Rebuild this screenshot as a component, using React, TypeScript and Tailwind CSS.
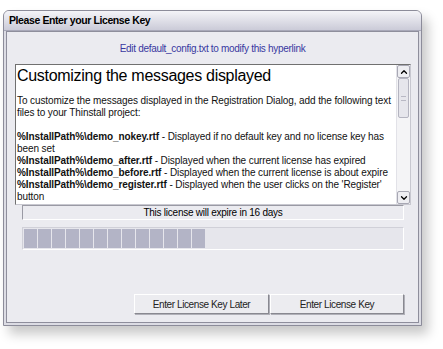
import { ChevronUp, ChevronDown } from 'lucide-react';

const lines: { bold?: string; text: string }[] = [
  { bold: '%InstallPath%\\demo_nokey.rtf', text: ' - Displayed if no default key and no license key has' },
  { text: 'been set' },
  { bold: '%InstallPath%\\demo_after.rtf', text: ' - Displayed when the current license has expired' },
  { bold: '%InstallPath%\\demo_before.rtf', text: ' - Displayed when the current license is about expire' },
  { bold: '%InstallPath%\\demo_register.rtf', text: " - Displayed when the user clicks on the 'Register'" },
  { text: 'button' },
];

export default function App() {
  return (
    <div className="w-[443px] h-[349px] bg-white overflow-hidden pl-[3px] pt-[10px]" style={{ fontFamily: '"Liberation Sans", Arial, sans-serif' }}>
      {/* Dialog window */}
      <div className="w-[419px] h-[316px] flex flex-col rounded-t-[6px] border border-[#8c8c9a] bg-[#dcdce4] shadow-[6px_8px_12px_rgba(0,0,0,0.22)]">
        <div className="h-[20px] shrink-0 flex items-center pl-[5px] rounded-t-[5px] bg-gradient-to-b from-[#f4f4f8] to-[#cbcbd8] border-b border-[#a8a8b8]">
          <span className="text-[10.5px] font-bold text-black leading-none tracking-[-0.4px]">
            Please Enter your License Key
          </span>
        </div>
        <div className="flex-1 mx-[2px] mb-[2px] border border-[#8e8e9c] bg-[#ebebf0] flex flex-col pl-[8px]">
          <div className="h-[32px] flex items-center justify-center text-[10px] tracking-[-0.3px] text-[#3838a0] pr-[8px]">
            Edit default_config.txt to modify this hyperlink
          </div>
          {/* Message box */}
          <div className="w-[396px] h-[141px] flex border border-t-[#707070] border-l-[#707070] border-r-[#c8c8d0] border-b-[#c8c8d0] bg-white">
            <div className="flex-1 pl-[1px] pt-[1px] text-black overflow-hidden">
              <div className="text-[16px] leading-[20px] tracking-[-0.3px]">Customizing the messages displayed</div>
              <div className="text-[10px] leading-[12px] mt-[9px] tracking-[-0.1px] whitespace-nowrap text-[#111]">
                To customize the messages displayed in the Registration Dialog, add the following text
                <br />
                files to your Thinstall project:
              </div>
              <div className="text-[10px] leading-[12px] mt-[12px] tracking-[-0.1px] whitespace-nowrap text-[#111]">
                {lines.map((l, i) => (
                  <div key={i}>
                    {l.bold && <span className="font-bold">{l.bold}</span>}
                    {l.text}
                  </div>
                ))}
              </div>
            </div>
            {/* Scrollbar */}
            <div className="w-[14px] shrink-0 flex flex-col bg-[#f4f4f6] border-l border-[#e2e2e8]">
              <div className="h-[13px] flex items-center justify-center border border-[#a8a8b4] rounded-[2px] bg-[#eeeef2]">
                <ChevronUp size={10} strokeWidth={3} className="text-black" />
              </div>
              <div className="h-[40px] mx-[1px] border border-[#b4b4c0] rounded-[2px] bg-[#e6e6ec] flex items-center justify-center">
                <div className="w-[5px] h-[5px] border-y border-[#b8b8c4]" />
              </div>
              <div className="flex-1" />
              <div className="h-[13px] flex items-center justify-center border border-[#a8a8b4] rounded-[2px] bg-[#eeeef2]">
                <ChevronDown size={10} strokeWidth={3} className="text-black" />
              </div>
            </div>
          </div>
          {/* Status */}
          <div className="ml-[7px] w-[382px] h-[15px] flex items-center justify-center border border-t-[#9a9aa4] border-l-[#9a9aa4] border-r-white border-b-white text-[10px] tracking-[-0.25px] text-black">
            This license will expire in 16 days
          </div>
          {/* Progress */}
          <div className="ml-[7px] mt-[7px] w-[382px] h-[23px] flex items-center gap-[1px] px-[1px] border border-t-[#d0d0d8] border-l-[#d0d0d8] border-r-white border-b-white bg-[#e6e6ec]">
            {Array.from({ length: 13 }).map((_, i) => (
              <div key={i} className="w-[13px] h-[19px] bg-[#b3b4c6]" />
            ))}
          </div>
          <div className="flex-1" />
          {/* Buttons */}
          <div className="flex gap-[1px] pl-[119px] mb-[8px]">
            <button className="w-[135px] h-[20px] text-[10px] tracking-[-0.4px] text-[#222] bg-[#ececf0] border border-t-white border-l-white border-r-[#888890] border-b-[#888890] shadow-[1px_1px_0_#b0b0b8]">
              Enter License Key Later
            </button>
            <button className="w-[134px] h-[20px] text-[10px] tracking-[-0.4px] text-[#222] bg-[#ececf0] border border-t-white border-l-white border-r-[#888890] border-b-[#888890] shadow-[1px_1px_0_#b0b0b8]">
              Enter License Key
            </button>
          </div>
        </div>
      </div>
    </div>
  );
}
